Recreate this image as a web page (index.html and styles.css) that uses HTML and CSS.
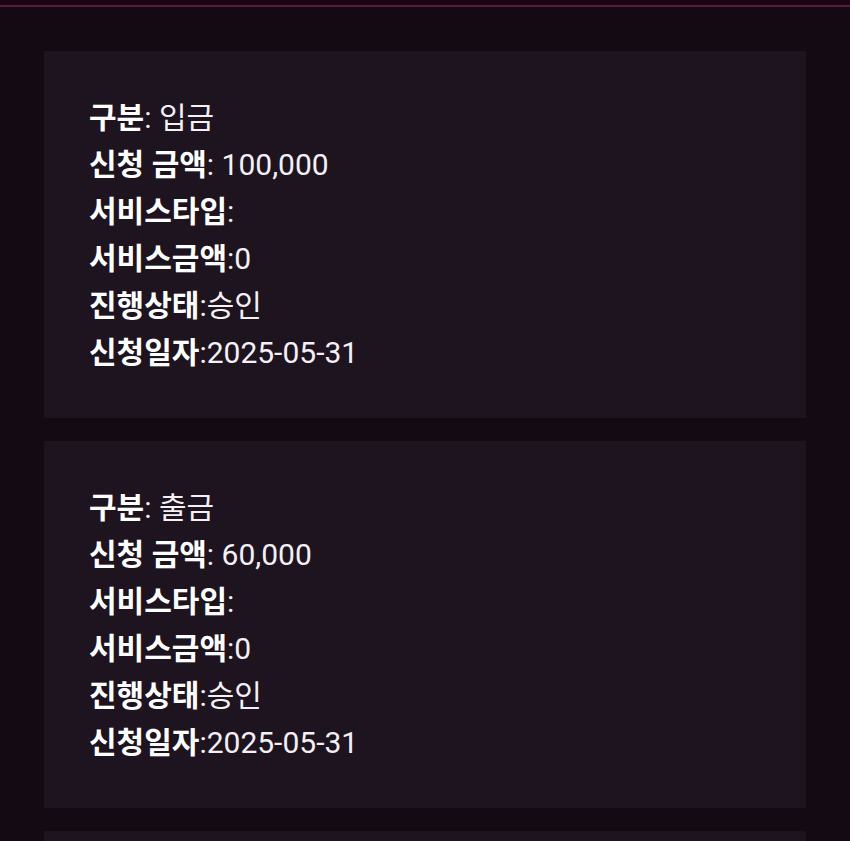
FILE: index.html
```html
<!DOCTYPE html>
<html lang="ko">
<head>
  <meta charset="UTF-8">
  <meta name="viewport" content="width=device-width, initial-scale=1.0">
  <title>입출금 내역</title>
  <link rel="stylesheet" href="styles.css">
</head>
<body>
  <div class="topbar"></div>
  <div class="history">
    <div class="history-card">
      <p><b>구분</b>: 입금</p>
      <p><b>신청 금액</b>: 100,000</p>
      <p><b>서비스타입</b>:</p>
      <p><b>서비스금액</b>:0</p>
      <p><b>진행상태</b>:승인</p>
      <p><b>신청일자</b>:2025-05-31</p>
    </div>
    <div class="history-card">
      <p><b>구분</b>: 출금</p>
      <p><b>신청 금액</b>: 60,000</p>
      <p><b>서비스타입</b>:</p>
      <p><b>서비스금액</b>:0</p>
      <p><b>진행상태</b>:승인</p>
      <p><b>신청일자</b>:2025-05-31</p>
    </div>
    <div class="history-card"></div>
  </div>
</body>
</html>
```

FILE: styles.css
```css
body {
  background: #130a14;
  font-family: Roboto, "Noto Sans CJK KR", sans-serif;
  color: #f4f0f4;
  margin: 0;
  padding: 0;
}
.topbar {
  height: 5px;
  background: #1a0612;
  border-bottom: 2px solid #5c1a40;
}
.history {
  padding: 44px 44px 0 44px;
  display: flex;
  flex-direction: column;
  gap: 23px;
}
.history-card {
  background: #1d1420;
  padding: 43px 45px 42px 45px;
  min-height: 40px;
}
.history-card p {
  margin: 0;
  font-size: 30px;
  line-height: 47px;
}
.history-card b {
  font-weight: bold;
  color: #ffffff;
}
```
